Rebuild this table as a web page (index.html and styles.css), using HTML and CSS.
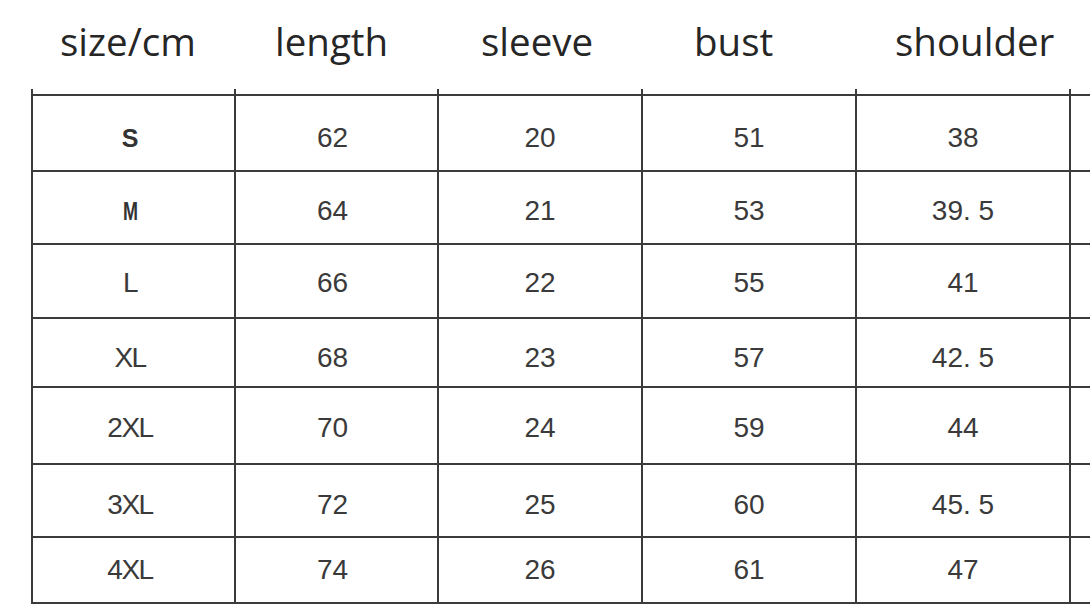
FILE: index.html
```html
<!DOCTYPE html>
<html lang="en">
<head>
<meta charset="utf-8">
<title>Size chart</title>
<link rel="stylesheet" href="styles.css">
</head>
<body>
<div class="sheet">
  <div class="head">
    <div class="hcell">size/cm</div>
    <div class="hcell">length</div>
    <div class="hcell">sleeve</div>
    <div class="hcell">bust</div>
    <div class="hcell">shoulder</div>
  </div>
  <div class="table">
    <div class="row spacer">
      <div class="cell"></div><div class="cell"></div><div class="cell"></div><div class="cell"></div><div class="cell"></div><div class="cell"></div>
    </div>
    <div class="row r1">
      <div class="cell"><span class="lbl small">S</span></div><div class="cell">62</div><div class="cell">20</div><div class="cell">51</div><div class="cell">38</div><div class="cell"></div>
    </div>
    <div class="row r2">
      <div class="cell"><span class="lbl small narrow">M</span></div><div class="cell">64</div><div class="cell">21</div><div class="cell">53</div><div class="cell">39. 5</div><div class="cell"></div>
    </div>
    <div class="row r3">
      <div class="cell"><span class="lbl">L</span></div><div class="cell">66</div><div class="cell">22</div><div class="cell">55</div><div class="cell">41</div><div class="cell"></div>
    </div>
    <div class="row r4">
      <div class="cell"><span class="lbl">XL</span></div><div class="cell">68</div><div class="cell">23</div><div class="cell">57</div><div class="cell">42. 5</div><div class="cell"></div>
    </div>
    <div class="row r5">
      <div class="cell"><span class="lbl">2XL</span></div><div class="cell">70</div><div class="cell">24</div><div class="cell">59</div><div class="cell">44</div><div class="cell"></div>
    </div>
    <div class="row r6">
      <div class="cell"><span class="lbl">3XL</span></div><div class="cell">72</div><div class="cell">25</div><div class="cell">60</div><div class="cell">45. 5</div><div class="cell"></div>
    </div>
    <div class="row r7 last">
      <div class="cell"><span class="lbl">4XL</span></div><div class="cell">74</div><div class="cell">26</div><div class="cell">61</div><div class="cell">47</div><div class="cell"></div>
    </div>
  </div>
</div>
</body>
</html>
```
FILE: styles.css
```css
html, body {
  margin: 0;
  padding: 0;
  background: #ffffff;
}

.sheet {
  width: 1090px;
  height: 607px;
  overflow: hidden;
}

.head {
  display: grid;
  grid-template-columns: 215px 206px 213px 201px auto;
  box-sizing: border-box;
  height: 89px;
  padding: 22px 0 0 60px;
  font-family: "Open Sans", "Noto Sans", sans-serif;
  font-size: 38.5px;
  line-height: 39px;
  color: #262626;
}

.hcell {
  white-space: nowrap;
}

.table {
  margin-left: 31px;
  font-family: "Liberation Sans", Arial, sans-serif;
  font-size: 28px;
  line-height: 1;
  color: #3a3a3a;
}

.row {
  display: grid;
  grid-template-columns: 203px 203px 204px 214px 214px 1fr;
}

.cell {
  box-sizing: border-box;
  border-left: 2px solid #3b3b3b;
  border-top: 2px solid #3b3b3b;
  display: flex;
  align-items: center;
  justify-content: center;
  white-space: nowrap;
}

.cell:nth-child(1) { padding-right: 7px; }
.cell:nth-child(2) { padding-right: 8px; }

.spacer { height: 5px; }
.spacer .cell { border-top: none; }

.r1 { height: 76px; }
.r1 .cell { padding-top: 10px; }
.r2 { height: 73px; }
.r2 .cell { padding-top: 7px; }
.r3 { height: 74px; }
.r3 .cell { padding-top: 4px; }
.r4 { height: 69px; }
.r4 .cell { padding-top: 11px; }
.r5 { height: 77px; }
.r5 .cell { padding-top: 5px; }
.r6 { height: 73px; }
.r6 .cell { padding-top: 9px; }
.r7 { height: 68px; }
.r7 .cell { padding-top: 0; border-bottom: 2px solid #3b3b3b; }

.lbl {
  display: inline-block;
  letter-spacing: -1.5px;
}

.small {
  font-size: 25px;
  font-weight: bold;
  letter-spacing: 0;
  color: #333333;
}

.narrow {
  transform: scaleX(0.72);
}
```
